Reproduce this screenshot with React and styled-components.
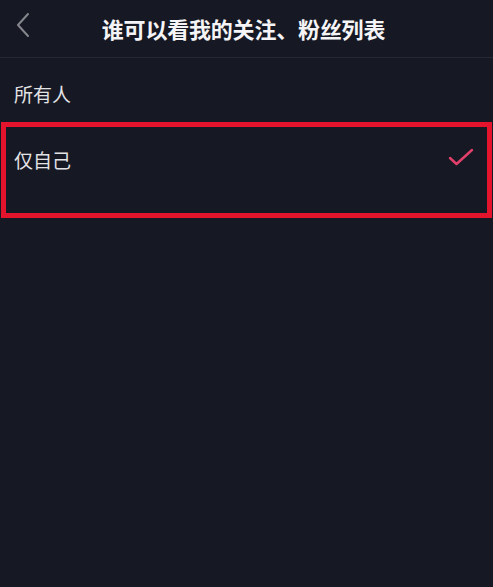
import styled, { createGlobalStyle } from "styled-components";

const GlobalStyle = createGlobalStyle`
  html, body {
    margin: 0;
    padding: 0;
    background: #161823;
  }
  body {
    font-family: "Noto Sans CJK SC", "Noto Sans", sans-serif;
  }
`;

const options = [
  { id: "all", label: "所有人" },
  { id: "me", label: "仅自己" },
];

export default function App() {
  const selected = "me";

  return (
    <Page>
      <GlobalStyle />
      <Header>
        <BackButton aria-label="返回">
          <svg width="16" height="26" viewBox="0 0 16 26" fill="none">
            <polyline
              points="13,2 3,13 13,24"
              stroke="#85868d"
              strokeWidth="2"
              strokeLinecap="round"
              strokeLinejoin="round"
            />
          </svg>
        </BackButton>
        <Title>谁可以看我的关注、粉丝列表</Title>
      </Header>
      <List>
        {options.map(opt =>
          opt.id === selected ? (
            <Highlight key={opt.id}>
              <Option $inset={8}>
                <Label>{opt.label}</Label>
                <Check />
              </Option>
            </Highlight>
          ) : (
            <Option key={opt.id} $inset={14} $top={7}>
              <Label>{opt.label}</Label>
            </Option>
          )
        )}
      </List>
    </Page>
  );
}

function Check() {
  return (
    <CheckMark width="28" height="22" viewBox="0 0 28 22" fill="none">
      <polyline
        points="3,11 9.5,17 25,3"
        stroke="#e2406a"
        strokeWidth="2.4"
        strokeLinecap="round"
        strokeLinejoin="round"
      />
    </CheckMark>
  );
}

const Page = styled.div`
  width: 100%;
  min-height: 100vh;
  background: #161823;
  color: #e6e6e9;
`;

const Header = styled.div`
  position: relative;
  height: 57px;
  display: flex;
  align-items: center;
  justify-content: center;
  border-bottom: 1px solid #262833;
`;

const BackButton = styled.button`
  position: absolute;
  left: 15px;
  top: 12px;
  padding: 0;
  border: none;
  background: none;
  display: flex;
  cursor: pointer;
`;

const Title = styled.h1`
  margin: 0 6px 2px 0;
  font-size: 22px;
  font-weight: 700;
  color: #f4f4f6;
  letter-spacing: -0.2px;
`;

const List = styled.div`
  display: flex;
  flex-direction: column;
`;

const Option = styled.div`
  height: 64px;
  box-sizing: border-box;
  display: flex;
  align-items: center;
  justify-content: space-between;
  padding: ${p => p.$top || 0}px 12px 0 ${p => p.$inset}px;
`;

const Label = styled.span`
  font-size: 19px;
  color: #e3e3e6;
`;

const CheckMark = styled.svg`
  display: block;
  margin-top: -3px;
`;

const Highlight = styled.div`
  height: 96px;
  box-sizing: border-box;
  margin: 0 1px;
  border: 5px solid #e3142c;
`;
